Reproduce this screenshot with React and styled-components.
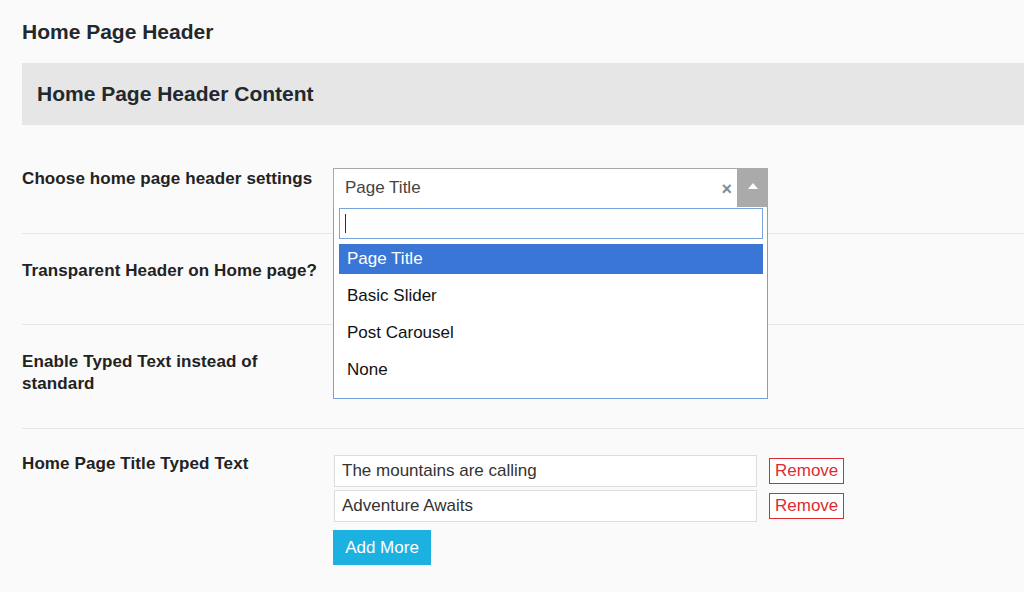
import React from "react";
import styled, { createGlobalStyle } from "styled-components";

const GlobalStyle = createGlobalStyle`
  html, body { margin: 0; padding: 0; }
  body {
    background: #fafafa;
    font-family: "Liberation Sans", Arial, Helvetica, sans-serif;
    color: #222;
    overflow: hidden;
  }
  * { box-sizing: border-box; }
`;

const Page = styled.div`
  padding-left: 22px;
  width: 1060px;
`;

const PageTitle = styled.h1`
  margin: 20px 0 19px;
  font-size: 21px;
  line-height: 24px;
  font-weight: 700;
  color: #23282d;
`;

const SectionBar = styled.div`
  height: 62px;
  background: #e6e6e6;
  display: flex;
  align-items: center;
  padding-left: 15px;
`;

const SectionTitle = styled.h2`
  margin: 0;
  font-size: 21px;
  line-height: 24px;
  font-weight: 700;
  color: #23282d;
`;

const Form = styled.div`
  margin-top: 17px;
`;

const Row = styled.div`
  display: grid;
  grid-template-columns: 311px 1fr;
  padding: 26px 0;
  border-bottom: ${(p) => (p.$last ? "none" : "1px solid #e6e6e6")};
`;

const Label = styled.div`
  font-size: 17px;
  line-height: 22px;
  font-weight: 700;
  color: #222;
  letter-spacing: 0.1px;
  max-width: 300px;
  margin-top: ${(p) => p.$offset || 0}px;
`;

const Field = styled.div`
  position: relative;
  min-height: ${(p) => p.$minHeight || 0}px;
`;

const SelectWrap = styled.div`
  position: relative;
  width: 435px;
  z-index: 5;
`;

const SelectBox = styled.div`
  height: 39px;
  display: flex;
  align-items: stretch;
  background: #fff;
  border-top: 1px solid #aaa;
  border-left: 1px solid #aaa;
`;

const SelectValue = styled.div`
  flex: 1;
  display: flex;
  align-items: center;
  padding-left: 11px;
  font-size: 17px;
  color: #444;
`;

const ClearMark = styled.span`
  display: flex;
  align-items: center;
  padding-right: 5px;
  font-size: 18px;
  font-weight: 700;
  color: #8a8a8a;
  margin-top: 3px;
`;

const ArrowBox = styled.div`
  width: 31px;
  background: #aaa;
  display: flex;
  align-items: center;
  justify-content: center;
  padding-bottom: 4px;
`;

const Dropdown = styled.div`
  position: absolute;
  top: 100%;
  left: 0;
  width: 435px;
  background: #fff;
  border: 1px solid #74a2df;
  border-top: none;
  padding: 1px 4px 13px 5px;
`;

const SearchBox = styled.div`
  height: 31px;
  border: 1px solid #78a6dc;
  background: #fff;
  display: flex;
  align-items: center;
  padding-left: 5px;
`;

const Caret = styled.span`
  display: block;
  width: 1px;
  height: 19px;
  background: #333;
`;

const Options = styled.ul`
  list-style: none;
  margin: 5px 0 0;
  padding: 0;
  display: flex;
  flex-direction: column;
  gap: 7px;
`;

const Option = styled.li`
  height: 30px;
  display: flex;
  align-items: center;
  padding-left: 8px;
  font-size: 17px;
  color: ${(p) => (p.$active ? "#fff" : "#111")};
  background: ${(p) => (p.$active ? "#3a76d6" : "transparent")};
`;

const TypedList = styled.div`
  display: flex;
  flex-direction: column;
  gap: 3px;
`;

const TypedRow = styled.div`
  display: flex;
  align-items: center;
  gap: 12px;
  padding-left: 1px;
`;

const TextInput = styled.div`
  width: 423px;
  height: 32px;
  background: #fff;
  border: 1px solid #ddd;
  display: flex;
  align-items: center;
  padding-left: 7px;
  font-size: 17px;
  color: #333;
`;

const RemoveButton = styled.button`
  height: 26px;
  padding: 0 5px;
  background: #fff;
  border: 1px solid #dd2b33;
  color: #dd2b33;
  font-family: inherit;
  font-size: 17px;
  line-height: 24px;
  border-radius: 0;
`;

const AddButton = styled.button`
  margin-top: 8px;
  width: 98px;
  height: 35px;
  border: none;
  border-radius: 0;
  background: #1bb1e1;
  color: #fff;
  font-family: inherit;
  font-size: 17px;
  padding: 0;
`;

const options = ["Page Title", "Basic Slider", "Post Carousel", "None"];
const typed = ["The mountains are calling", "Adventure Awaits"];

export default function App() {
  return (
    <>
      <GlobalStyle />
      <Page>
        <PageTitle>Home Page Header</PageTitle>
        <SectionBar>
          <SectionTitle>Home Page Header Content</SectionTitle>
        </SectionBar>
        <Form>
          <Row>
            <Label>Choose home page header settings</Label>
            <Field>
              <SelectWrap>
                <SelectBox>
                  <SelectValue>Page Title</SelectValue>
                  <ClearMark>×</ClearMark>
                  <ArrowBox>
                    <svg width="10" height="6" viewBox="0 0 10 6">
                      <path d="M0 6 L5 0 L10 6 Z" fill="#fff" />
                    </svg>
                  </ArrowBox>
                </SelectBox>
                <Dropdown>
                  <SearchBox>
                    <Caret />
                  </SearchBox>
                  <Options>
                    {options.map((o, i) => (
                      <Option key={o} $active={i === 0}>
                        {o}
                      </Option>
                    ))}
                  </Options>
                </Dropdown>
              </SelectWrap>
            </Field>
          </Row>
          <Row>
            <Label>Transparent Header on Home page?</Label>
            <Field $minHeight={38} />
          </Row>
          <Row>
            <Label>Enable Typed Text instead of standard</Label>
            <Field $minHeight={51} />
          </Row>
          <Row $last>
            <Label $offset={-2}>Home Page Title Typed Text</Label>
            <Field>
              <TypedList>
                {typed.map((t) => (
                  <TypedRow key={t}>
                    <TextInput>{t}</TextInput>
                    <RemoveButton>Remove</RemoveButton>
                  </TypedRow>
                ))}
              </TypedList>
              <AddButton>Add More</AddButton>
            </Field>
          </Row>
        </Form>
      </Page>
    </>
  );
}
